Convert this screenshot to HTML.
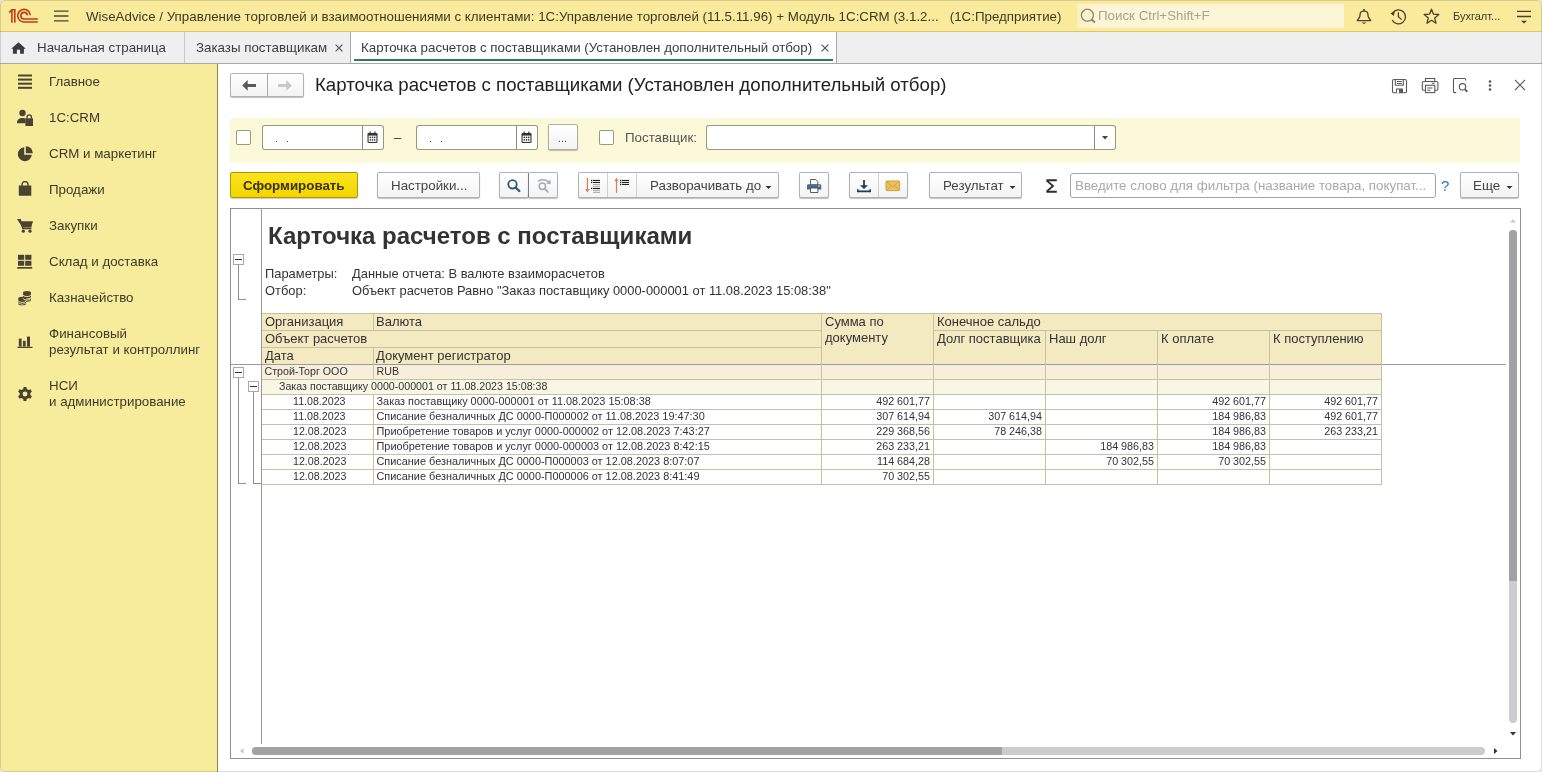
<!DOCTYPE html>
<html><head><meta charset="utf-8">
<style>
*{margin:0;padding:0;box-sizing:border-box}
html,body{width:1542px;height:772px;overflow:hidden;background:#dfe2e6}
body{font-family:"Liberation Sans",sans-serif;color:#333;position:relative}
.a{position:absolute;white-space:nowrap}
#win{position:absolute;left:0;top:0;width:1542px;height:772px;border-radius:5px;overflow:hidden;background:#fff;will-change:transform}
#hdr{position:absolute;left:0;top:0;width:1542px;height:32px;background:#f9ea9c;border-bottom:1px solid #e0c566}
#tabs{position:absolute;left:0;top:32px;width:1542px;height:32px;background:#efeff0;border-bottom:1px solid #a9a9a9}
#side{position:absolute;left:0;top:64px;width:218px;height:708px;background:#f7ec9c;border-right:1px solid #8c8455}
.t13{font-size:13.33px;line-height:16px}
.btn{position:absolute;border:1px solid rgba(0,0,0,.3);border-radius:2px;background:linear-gradient(#fff,#f3f3f3);background-clip:padding-box;box-shadow:0 1px 1px rgba(0,0,0,.25)}
.inp{position:absolute;border:1px solid rgba(40,35,0,.45);border-radius:3px;background:#fff;background-clip:padding-box}
.si{position:absolute;left:17px;width:16px;height:16px}
.st{position:absolute;left:49px;font-size:13.33px;line-height:16px;color:#3d3a2a}
</style></head><body>
<div id="win">
<!-- header -->
<div id="hdr">
  <svg class="a" style="left:0;top:0" width="40" height="32" viewBox="0 0 40 32"><g fill="none" stroke="#bf3a1b" stroke-width="1.6"><path d="M9.2 12.6L11.9 9.8H14.8V22.7M11.9 9.8V22.7"/><path d="M30.3 15.2A6.3 6.3 0 1 0 24 22H37.8"/><path d="M27.4 15.4A3.3 3.3 0 1 0 24 19H37.8"/></g></svg>
  <svg class="a" style="left:54px;top:10px" width="15" height="12" viewBox="0 0 15 12"><g stroke="#4a4630" stroke-width="1.3"><path d="M0 1.2H14.5M0 6H14.5M0 10.8H14.5"/></g></svg>
  <div class="a t13" style="left:86px;top:9px;color:#3e3a24">WiseAdvice / Управление торговлей и взаимоотношениями с клиентами: 1С:Управление торговлей (11.5.11.96) + Модуль 1С:CRM (3.1.2...&nbsp;&nbsp; (1С:Предприятие)</div>
  <div class="a" style="left:1077px;top:4px;width:267px;height:24px;background:linear-gradient(90deg,#fbf0c0,#fdf6d6 8%,#fdf6d6)"></div>
  <div class="a t13" style="left:1098px;top:8px;color:#a8a290">Поиск Ctrl+Shift+F</div>
  <svg class="a" style="left:1079px;top:7px" width="18" height="18" viewBox="0 0 18 18"><circle cx="8.4" cy="8.2" r="6" fill="none" stroke="#8d8872" stroke-width="1.3"/><path d="M12.6 12.4L16 15.6" stroke="#8d8872" stroke-width="2"/></svg>
  <svg class="a" style="left:1356px;top:8px" width="16" height="17" viewBox="0 0 16 17"><path d="M1.3 12.6H14.7L12.3 8.8L11.7 5.2Q11.3 3.2 8 3.2Q4.7 3.2 4.3 5.2L3.7 8.8Z" fill="none" stroke="#4a4128" stroke-width="1.3" stroke-linejoin="round"/><circle cx="8" cy="2" r="1.1" fill="#4a4128"/><path d="M5.4 14.4H10.6L8 16Z" fill="#4a4128"/></svg>
  <svg class="a" style="left:1389px;top:8px" width="18" height="17" viewBox="0 0 18 17"><g fill="none" stroke="#4a4128" stroke-width="1.3"><path d="M3.6 5A7 7 0 1 1 3.2 12"/><path d="M9.4 4.3V8.6L12.6 11.6"/></g><path d="M1.3 5.2L5.8 3.6L4.8 8Z" fill="#4a4128"/></svg>
  <svg class="a" style="left:1423px;top:8px" width="17" height="17" viewBox="0 0 17 17"><path d="M8.5 1.2L10.5 6.2L15.8 6.5L11.7 9.9L13 15.2L8.5 12.3L4 15.2L5.3 9.9L1.2 6.5L6.5 6.2Z" fill="none" stroke="#4a4128" stroke-width="1.3" stroke-linejoin="round"/></svg>
  <svg class="a" style="left:1516px;top:9px" width="16" height="16" viewBox="0 0 16 16"><g stroke="#4a4128" stroke-width="1.3"><path d="M1 2.4H15M1 7.5H15"/></g><path d="M5 11.8H11L8 14.6Z" fill="#4a4128"/></svg>
  <div class="a" style="left:1453px;top:9px;font-size:11px;line-height:14px;color:#3d3a2a">Бухгалт...</div>
</div>
<!-- tabs -->
<div id="tabs">
  <svg class="a" style="left:11px;top:9px" width="16" height="14" viewBox="0 0 16 14"><path d="M7.5 1.2L14.8 7.7H12.9V12.7H9.1V8.8H5.9V12.7H1.9V7.7H0.2Z" fill="#3b3b3b"/></svg>
  <div class="a t13" style="left:37px;top:8px;color:#3d3d3d">Начальная страница</div>
  <svg class="a" style="left:335px;top:12px" width="8" height="8" viewBox="0 0 8 8"><path d="M0.6 0.6L7.4 7.4M7.4 0.6L0.6 7.4" stroke="#555" stroke-width="1.2"/></svg>
  <div class="a" style="left:184px;top:0;width:1px;height:31px;background:#c8c8c8"></div>
  <div class="a t13" style="left:196px;top:8px;color:#3d3d3d">Заказы поставщикам</div>
  <div class="a" style="left:350px;top:0;width:1px;height:31px;background:#a9a9a9"></div>
  <div class="a" style="left:351px;top:0;width:486px;height:31px;background:#fff"></div>
  <div class="a t13" style="left:361px;top:8px;color:#3d3d3d">Карточка расчетов с поставщиками (Установлен дополнительный отбор)</div>
  <div class="a" style="left:354px;top:27px;width:479px;height:2px;background:#2e7d58"></div>
  <div class="a" style="left:836px;top:0;width:1px;height:31px;background:#a9a9a9"></div>
  <svg class="a" style="left:821px;top:12px" width="8" height="8" viewBox="0 0 8 8"><path d="M0.6 0.6L7.4 7.4M7.4 0.6L0.6 7.4" stroke="#555" stroke-width="1.2"/></svg>
</div>
<!-- sidebar -->
<div id="side">
  <svg class="a" style="left:17px;top:10px" width="16" height="16" viewBox="0 0 16 16"><g fill="#4b4332"><rect x="1" y="0.5" width="14" height="2"/><rect x="1" y="4.6" width="14" height="2"/><rect x="1" y="8.7" width="14" height="2"/><rect x="1" y="12.8" width="14" height="2"/></g></svg>
  <svg class="a" style="left:16px;top:45px" width="18" height="18" viewBox="0 0 18 18"><g fill="#4b4332"><circle cx="6.5" cy="4" r="3.2"/><path d="M1 14.2C1 10.5 3 9 6.5 9C8.2 9 9.2 9.4 9.6 10V14.2Z"/><path d="M9.4 9.2H17V17H9.4Z"/><path d="M11 9.5V8A2.2 2.2 0 0 1 15.4 8V9.5" fill="none" stroke="#4b4332" stroke-width="1.3"/></g></svg>
  <svg class="a" style="left:17px;top:82px" width="16" height="16" viewBox="0 0 16 16"><g fill="#4b4332"><path d="M7.2 1.2A7 7 0 1 0 14.8 8.8H7.2Z"/><path d="M8.8 0.2A6.8 6.8 0 0 1 15.8 7.2H8.8Z"/></g></svg>
  <svg class="a" style="left:17px;top:117px" width="16" height="16" viewBox="0 0 16 16"><g fill="#4b4332"><path d="M1.8 4.5H14.3V14.8H1.8Z"/><path d="M5 6V3.5A3 3 0 0 1 11 3.5V6" fill="none" stroke="#4b4332" stroke-width="1.4"/></g><path d="M5 4.5V6.5M11 4.5V6.5" stroke="#f8e99b" stroke-width="0"/></svg>
  <svg class="a" style="left:16px;top:154px" width="18" height="16" viewBox="0 0 18 16"><g fill="#4b4332"><path d="M1 1H4L5 3.2H17L15.2 9.5H6.5Z"/><path d="M4 1 L6.8 10.5H15.5" fill="none" stroke="#4b4332" stroke-width="1.3"/><circle cx="7.3" cy="13.2" r="1.6"/><circle cx="14" cy="13.2" r="1.6"/></g></svg>
  <svg class="a" style="left:17px;top:190px" width="16" height="16" viewBox="0 0 16 16"><g fill="#4b4332"><rect x="1" y="0.8" width="6.2" height="5"/><rect x="8.2" y="0.8" width="6.2" height="5"/><rect x="1" y="6.8" width="6.2" height="5"/><rect x="8.2" y="6.8" width="6.2" height="5"/><rect x="0.2" y="13" width="15" height="1.7"/></g></svg>
  <svg class="a" style="left:17px;top:226px" width="16" height="16" viewBox="0 0 16 16"><g fill="#4b4332"><ellipse cx="10" cy="2.8" rx="4" ry="1.9"/><path d="M6 3.5H14V6.5A4 1.9 0 0 1 6 6.5Z"/><path d="M6 7.3V9.8A4 1.9 0 0 0 14 9.8V7.3A4 1.9 0 0 1 6 7.3Z"/><ellipse cx="5.2" cy="8.6" rx="4" ry="1.9"/><path d="M1.2 9.3H9.2V11.8A4 1.9 0 0 1 1.2 11.8Z"/><path d="M1.2 12.6V13.4A4 1.9 0 0 0 9.2 13.4V12.6A4 1.9 0 0 1 1.2 12.6Z"/></g><g fill="none" stroke="#f8e99b" stroke-width="0.9"><path d="M6 4.7A4 1.9 0 0 0 14 4.7"/><path d="M1.2 10.5A4 1.9 0 0 0 9.2 10.5"/><path d="M6 8.2A4 1.9 0 0 0 14 8.2"/></g></svg>
  <svg class="a" style="left:17px;top:270px" width="16" height="16" viewBox="0 0 16 16"><g fill="#4b4332"><rect x="1.8" y="4.6" width="2.8" height="8"/><rect x="5.9" y="6.8" width="2.8" height="5.8"/><rect x="10" y="2.6" width="3" height="10"/><rect x="0.5" y="12.8" width="15" height="1.2"/></g></svg>
  <svg class="a" style="left:17px;top:322px" width="16" height="16" viewBox="0 0 16 16"><path fill="#4b4332" fill-rule="evenodd" d="M6.6 1H9.4L9.8 3A5 5 0 0 1 11.6 4L13.5 3.3L14.9 5.7L13.3 7A5 5 0 0 1 13.3 9L14.9 10.3L13.5 12.7L11.6 12A5 5 0 0 1 9.8 13L9.4 15H6.6L6.2 13A5 5 0 0 1 4.4 12L2.5 12.7L1.1 10.3L2.7 9A5 5 0 0 1 2.7 7L1.1 5.7L2.5 3.3L4.4 4A5 5 0 0 1 6.2 3ZM8 5.6A2.4 2.4 0 1 0 8 10.4A2.4 2.4 0 1 0 8 5.6Z"/></svg>
  <div class="st" style="top:10px">Главное</div>
  <div class="st" style="top:46px">1С:CRM</div>
  <div class="st" style="top:82px">CRM и маркетинг</div>
  <div class="st" style="top:118px">Продажи</div>
  <div class="st" style="top:154px">Закупки</div>
  <div class="st" style="top:190px">Склад и доставка</div>
  <div class="st" style="top:226px">Казначейство</div>
  <div class="st" style="top:262px">Финансовый<br>результат и контроллинг</div>
  <div class="st" style="top:314px">НСИ<br>и администрирование</div>
</div>
<!-- content -->
<div id="content">
  <!-- nav buttons -->
  <div class="btn" style="left:230px;top:73px;width:74px;height:24px"></div>
  <div class="a" style="left:267px;top:74px;width:1px;height:22px;background:#a8a8a8"></div>
  <svg class="a" style="left:241px;top:79px" width="16" height="13" viewBox="0 0 16 13"><path d="M1.2 6.4L6.7 1.1V5H15V7.9H6.7V11.8Z" fill="#5a5a5a"/></svg>
  <svg class="a" style="left:277px;top:79px" width="16" height="13" viewBox="0 0 16 13"><path d="M14.8 6.4L9.3 1.1V5H1V7.9H9.3V11.8Z" fill="#c8c8c8"/></svg>
  <div class="a" style="left:315px;top:74px;font-size:18.67px;line-height:22px;color:#222">Карточка расчетов с поставщиками (Установлен дополнительный отбор)</div>
  <!-- form icons -->
  <svg class="a" style="left:1391px;top:78px" width="17" height="16" viewBox="0 0 17 16"><g fill="none" stroke="#5a5a5a" stroke-width="1.1"><rect x="1.5" y="1.5" width="14" height="13.3" rx="1.4"/><path d="M4.3 1.5V7.2H12.3V1.5"/><path d="M6 3.5H10.8M6 5.5H10.8"/></g><rect x="5" y="10.5" width="7" height="4.5" fill="#5a5a5a"/><rect x="6" y="11.6" width="2" height="3.4" fill="#fff"/></svg>
  <svg class="a" style="left:1421px;top:77px" width="18" height="17" viewBox="0 0 18 17"><g fill="none" stroke="#5a5a5a" stroke-width="1.1"><rect x="4.5" y="1.5" width="9.3" height="3"/><path d="M4.2 13.2H2.6A1.3 1.3 0 0 1 1.3 11.9V5.8A1.3 1.3 0 0 1 2.6 4.5H15.6A1.3 1.3 0 0 1 16.9 5.8V11.9A1.3 1.3 0 0 1 15.6 13.2H14"/><rect x="4.5" y="8.3" width="9.3" height="7.3" fill="#fff"/><path d="M6.3 11H11.5M6.3 13.2H9.5"/><path d="M10.8 6.3H13.5"/></g></svg>
  <svg class="a" style="left:1452px;top:77px" width="17" height="17" viewBox="0 0 17 17"><g fill="none" stroke="#5a5a5a" stroke-width="1.1"><path d="M4.2 15.6H2.5A1 1 0 0 1 1.5 14.6V2.5A1 1 0 0 1 2.5 1.5H12.6A1 1 0 0 1 13.6 2.5V3.6"/><circle cx="10.5" cy="9.8" r="3.2"/></g><path d="M12.8 12.2L15.4 14.8" stroke="#5a5a5a" stroke-width="1.8"/></svg>
  <svg class="a" style="left:1488px;top:80px" width="4" height="11" viewBox="0 0 4 11"><g fill="#555"><circle cx="2" cy="1.5" r="1.3"/><circle cx="2" cy="5.5" r="1.3"/><circle cx="2" cy="9.5" r="1.3"/></g></svg>
  <svg class="a" style="left:1514px;top:79px" width="12" height="12" viewBox="0 0 12 12"><path d="M1 1L11 11M11 1L1 11" stroke="#666" stroke-width="1.1"/></svg>
  <!-- filter panel -->
  <div class="a" style="left:230px;top:118px;width:1290px;height:45px;background:#fcf9da"></div>
  <div class="a" style="left:236px;top:130px;width:15px;height:15px;border:1px solid rgba(40,35,0,.45);border-radius:2px;background:#fff;background-clip:padding-box"></div>
  <div class="inp" style="left:262px;top:125px;width:122px;height:25px"></div>
  <div class="a" style="left:362px;top:126px;width:1px;height:23px;background:#8f8b7c"></div><svg class="a" style="left:367px;top:131px" width="11" height="12" viewBox="0 0 11 12"><g fill="#333"><rect x="0.5" y="2" width="10" height="10" rx="1.3"/><rect x="2.5" y="0.5" width="1.2" height="2.5"/><rect x="7.3" y="0.5" width="1.2" height="2.5"/></g><rect x="1.6" y="4.6" width="7.8" height="6.3" fill="#fff"/><g fill="#333"><circle cx="3.3" cy="6.4" r="0.8"/><circle cx="5.5" cy="6.4" r="0.8"/><circle cx="7.7" cy="6.4" r="0.8"/><circle cx="3.3" cy="8.9" r="0.8"/><circle cx="5.5" cy="8.9" r="0.8"/><circle cx="7.7" cy="8.9" r="0.8"/></g></svg>
  <div class="a" style="left:276px;top:141px;width:1px;height:1px;background:#444"></div><div class="a" style="left:287px;top:141px;width:1px;height:1px;background:#444"></div>
  <div class="a" style="left:394px;top:130px;font-size:13.33px;line-height:16px;color:#333">–</div>
  <div class="inp" style="left:416px;top:125px;width:122px;height:25px"></div>
  <div class="a" style="left:516px;top:126px;width:1px;height:23px;background:#8f8b7c"></div><svg class="a" style="left:521px;top:131px" width="11" height="12" viewBox="0 0 11 12"><g fill="#333"><rect x="0.5" y="2" width="10" height="10" rx="1.3"/><rect x="2.5" y="0.5" width="1.2" height="2.5"/><rect x="7.3" y="0.5" width="1.2" height="2.5"/></g><rect x="1.6" y="4.6" width="7.8" height="6.3" fill="#fff"/><g fill="#333"><circle cx="3.3" cy="6.4" r="0.8"/><circle cx="5.5" cy="6.4" r="0.8"/><circle cx="7.7" cy="6.4" r="0.8"/><circle cx="3.3" cy="8.9" r="0.8"/><circle cx="5.5" cy="8.9" r="0.8"/><circle cx="7.7" cy="8.9" r="0.8"/></g></svg>
  <div class="a" style="left:430px;top:141px;width:1px;height:1px;background:#444"></div><div class="a" style="left:441px;top:141px;width:1px;height:1px;background:#444"></div>
  <div class="btn" style="left:548px;top:124px;width:30px;height:26px"></div>
  <div class="a" style="left:558px;top:131px;font-size:11px;line-height:14px;color:#555">...</div>
  <div class="a" style="left:599px;top:130px;width:15px;height:15px;border:1px solid rgba(40,35,0,.45);border-radius:2px;background:#fff;background-clip:padding-box"></div>
  <div class="a" style="left:625px;top:130px;font-size:13.33px;line-height:16px;color:#555">Поставщик:</div>
  <div class="inp" style="left:706px;top:125px;width:410px;height:25px"></div>
  <div class="a" style="left:1094px;top:126px;width:1px;height:23px;background:#8f8b7c"></div>
  <svg class="a" style="left:1102px;top:136px" width="6" height="4" viewBox="0 0 6 4"><path d="M0 0H6L3 3.5Z" fill="#444"/></svg>
  <!-- toolbar -->
  <div class="a" style="left:230px;top:172px;width:128px;height:26px;border:1px solid #ad9700;border-radius:2px;background:linear-gradient(#fae41c,#f3d500);box-shadow:0 1px 1px rgba(0,0,0,.2)"></div>
  <div class="a" style="left:243px;top:178px;font-size:13.33px;line-height:16px;font-weight:bold;color:#3a3200">Сформировать</div>
  <div class="btn" style="left:377px;top:172px;width:103px;height:26px"></div>
  <div class="a" style="left:391px;top:178px;font-size:13.33px;line-height:16px;color:#444">Настройки...</div>
  <div class="btn" style="left:499px;top:172px;width:30px;height:26px"></div>
  <div class="btn" style="left:528px;top:172px;width:30px;height:26px"></div>
  <div class="btn" style="left:578px;top:172px;width:201px;height:26px"></div>
  <div class="a" style="left:607px;top:173px;width:1px;height:24px;background:#d0d0d0"></div>
  <div class="a" style="left:636px;top:173px;width:1px;height:24px;background:#d0d0d0"></div>
  <div class="a" style="left:650px;top:178px;font-size:13.33px;line-height:16px;color:#444">Разворачивать до</div>
  <svg class="a" style="left:765px;top:186px" width="7" height="4" viewBox="0 0 7 4"><path d="M0.5 0H6.5L3.5 3Z" fill="#333"/></svg>
  <div class="btn" style="left:799px;top:172px;width:30px;height:26px"></div>
  <div class="btn" style="left:849px;top:172px;width:59px;height:26px"></div>
  <div class="a" style="left:878px;top:173px;width:1px;height:24px;background:#d0d0d0"></div>
  <div class="btn" style="left:929px;top:172px;width:93px;height:26px"></div>
  <div class="a" style="left:943px;top:178px;font-size:13.33px;line-height:16px;color:#444">Результат</div>
  <svg class="a" style="left:1009px;top:186px" width="7" height="4" viewBox="0 0 7 4"><path d="M0.5 0H6.5L3.5 3Z" fill="#333"/></svg>
  <svg class="a" style="left:1045px;top:179px" width="13" height="14" viewBox="0 0 13 14"><path d="M1.4 1.3H11.8M1.4 12.7H11.8" stroke="#2b2b2b" stroke-width="2"/><path d="M1.8 1.6L8 7L1.8 12.4" fill="none" stroke="#2b2b2b" stroke-width="1.8"/></svg>
  <div class="inp" style="left:1070px;top:173px;width:366px;height:25px;border-color:#a3a3a3"></div>
  <div class="a" style="left:1075px;top:178px;font-size:13.33px;line-height:16px;color:#a9a9a9">Введите слово для фильтра (название товара, покупат...</div>
  <div class="a" style="left:1441px;top:177px;font-size:15px;line-height:17px;color:#2d75b3">?</div>
  <div class="btn" style="left:1460px;top:172px;width:59px;height:26px"></div>
  <div class="a" style="left:1473px;top:178px;font-size:13.33px;line-height:16px;color:#444">Еще</div>
  <svg class="a" style="left:1506px;top:186px" width="7" height="4" viewBox="0 0 7 4"><path d="M0.5 0H6.5L3.5 3Z" fill="#333"/></svg>

  <svg class="a" style="left:504px;top:177px" width="20" height="18" viewBox="0 0 20 18"><circle cx="8.5" cy="7.3" r="4.2" fill="none" stroke="#2f5d75" stroke-width="1.9"/><path d="M11.6 10.5L15.3 14" stroke="#2f5d75" stroke-width="2.4" stroke-linecap="round"/></svg>
  <svg class="a" style="left:533px;top:177px" width="20" height="18" viewBox="0 0 20 18"><path d="M5 4.6C7 2.4 12 1.8 15.5 4.6" fill="none" stroke="#a3adb0" stroke-width="1.5"/><path d="M17.6 2.6L17.6 7.2L13.2 6.6Z" fill="#a3adb0"/><circle cx="9.4" cy="9.3" r="3.2" fill="none" stroke="#a3adb0" stroke-width="1.5"/><path d="M11.6 11.6L14.8 14.8" stroke="#a3adb0" stroke-width="1.8" stroke-linecap="round"/></svg>
  <svg class="a" style="left:583px;top:176px" width="20" height="18" viewBox="0 0 20 18"><path d="M4.4 1.8V14.5" stroke="#d6815a" stroke-width="1.2"/><path d="M2.2 13H6.6L4.4 16.5Z" fill="#d6815a"/><g fill="#222"><rect x="8" y="3.8" width="1.3" height="1.3"/><rect x="10" y="3.9" width="7" height="1.1"/><rect x="8" y="5.8" width="1.3" height="1.3"/><rect x="10" y="5.9" width="7" height="1.1"/><rect x="8" y="11.8" width="1.3" height="1.3"/><rect x="10" y="11.9" width="7" height="1.1"/></g><g fill="#999"><rect x="10" y="7.9" width="7" height="0.9"/><rect x="10" y="9.8" width="7" height="0.9"/><rect x="10" y="13.8" width="7" height="0.9"/><rect x="10" y="15.8" width="7" height="0.9"/></g></svg>
  <svg class="a" style="left:612px;top:176px" width="20" height="18" viewBox="0 0 20 18"><path d="M4.5 4V16.8" stroke="#d6815a" stroke-width="1.2"/><path d="M2.3 5.2H6.7L4.5 1.7Z" fill="#d6815a"/><g fill="#222"><rect x="8" y="3.8" width="1.3" height="1.3"/><rect x="10" y="3.9" width="7" height="1.1"/><rect x="8" y="5.8" width="1.3" height="1.3"/><rect x="10" y="5.9" width="7" height="1.1"/><rect x="8" y="7.8" width="1.3" height="1.3"/><rect x="10" y="7.9" width="7" height="1.1"/></g></svg>
  <svg class="a" style="left:806px;top:178px" width="16" height="16" viewBox="0 0 16 16"><path d="M4.6 1.5H9.8L11.8 3.5V7H4.6Z" fill="#fff" stroke="#3d4a5c" stroke-width="0.9"/><path d="M2 6.3H14A1.3 1.3 0 0 1 15.3 7.6V11.6H1V7.6A1.3 1.3 0 0 1 2 6.3Z" fill="#506a8e"/><rect x="12" y="7.5" width="1.8" height="0.9" fill="#dde6f0"/><path d="M4.5 10H11.9V14.5H4.5Z" fill="#fff" stroke="#3d4a5c" stroke-width="0.9"/></svg>
  <svg class="a" style="left:856px;top:178px" width="16" height="16" viewBox="0 0 16 16"><path d="M8 2V9" stroke="#143f66" stroke-width="1.8"/><path d="M4 7.2H12L8 11Z" fill="#143f66"/><path d="M1.8 11.2V13.4H14.2V11.2" fill="none" stroke="#143f66" stroke-width="1.6"/></svg>
  <svg class="a" style="left:885px;top:180px" width="16" height="12" viewBox="0 0 16 12"><rect x="1" y="1" width="13.6" height="9.6" rx="1" fill="#ecc15a" stroke="#c99a3c" stroke-width="0.9"/><path d="M1.4 1.4L7.8 6.8L14.2 1.4M1.4 10.2L6 6M14.2 10.2L9.6 6" fill="none" stroke="#c99a3c" stroke-width="0.8"/></svg>
  <!-- report -->
  <div id="rep" class="a" style="left:230px;top:208px;width:1291px;height:551px;border:1px solid #8f8f8f;background:#fff;overflow:hidden"></div>
  <div class="a" style="left:261px;top:209px;width:1px;height:535px;background:#9a9a9a"></div>
  <div class="a" style="left:231px;top:364px;width:1275px;height:1px;background:#9a9a9a"></div>
  <div class="a" style="left:268px;top:222px;font-size:24px;line-height:28px;font-weight:bold;color:#333">Карточка расчетов с поставщиками</div>
  <div class="a" style="left:265px;top:266px;font-size:12.9px;line-height:16px;color:#333">Параметры:</div>
  <div class="a" style="left:352px;top:266px;font-size:12.9px;line-height:16px;color:#333">Данные отчета: В валюте взаиморасчетов</div>
  <div class="a" style="left:265px;top:283px;font-size:12.9px;line-height:16px;color:#333">Отбор:</div>
  <div class="a" style="left:352px;top:283px;font-size:12.9px;line-height:16px;color:#333">Объект расчетов Равно "Заказ поставщику 0000-000001 от 11.08.2023 15:08:38"</div>
<!-- tree -->
  <div class="a" style="left:233px;top:254px;width:11px;height:11px;border:1px solid #a9a9a9;background:#fff"></div>
  <div class="a" style="left:235px;top:259px;width:7px;height:1px;background:#333"></div>
  <div class="a" style="left:238px;top:265px;width:1px;height:34px;background:#8e8e8e"></div>
  <div class="a" style="left:238px;top:299px;width:8px;height:1px;background:#8e8e8e"></div>
  <div class="a" style="left:233px;top:367px;width:11px;height:11px;border:1px solid #a9a9a9;background:#fff"></div>
  <div class="a" style="left:235px;top:372px;width:7px;height:1px;background:#333"></div>
  <div class="a" style="left:238px;top:378px;width:1px;height:106px;background:#8e8e8e"></div>
  <div class="a" style="left:238px;top:483px;width:8px;height:1px;background:#8e8e8e"></div>
  <div class="a" style="left:248px;top:381px;width:11px;height:11px;border:1px solid #a9a9a9;background:#fff"></div>
  <div class="a" style="left:250px;top:386px;width:7px;height:1px;background:#333"></div>
  <div class="a" style="left:253px;top:392px;width:1px;height:92px;background:#8e8e8e"></div>
  <div class="a" style="left:253px;top:483px;width:8px;height:1px;background:#8e8e8e"></div>
  <!-- scrollbars -->
  <div class="a" style="left:1509px;top:230px;width:8px;height:493px;border-radius:4px;background:#cdcbcf"></div>
  <div class="a" style="left:1509px;top:230px;width:8px;height:351px;border-radius:4px 4px 0 0;background:#a3a1a6"></div>
  <svg class="a" style="left:1510px;top:219px" width="6" height="4" viewBox="0 0 6 4"><path d="M0 3.5H6L3 0Z" fill="#c8c8c8"/></svg>
  <svg class="a" style="left:1510px;top:732px" width="6" height="4" viewBox="0 0 6 4"><path d="M0 0H6L3 3.5Z" fill="#333"/></svg>
  <div class="a" style="left:252px;top:747px;width:1233px;height:8px;border-radius:4px;background:#cdcbcf"></div>
  <div class="a" style="left:252px;top:747px;width:750px;height:8px;border-radius:4px 0 0 4px;background:#a3a1a6"></div>
  <svg class="a" style="left:240px;top:748px" width="4" height="6" viewBox="0 0 4 6"><path d="M3.5 0V6L0 3Z" fill="#c8c8c8"/></svg>
  <svg class="a" style="left:1494px;top:748px" width="4" height="6" viewBox="0 0 4 6"><path d="M0 0V6L3.5 3Z" fill="#333"/></svg>
<!--REPORT-->
<div class="a" style="left:262px;top:313px;width:1120px;height:51px;background:#f3eac1"></div>
<div class="a" style="left:262px;top:364px;width:1120px;height:15px;background:#f7eedb"></div>
<div class="a" style="left:262px;top:379px;width:1120px;height:15px;background:#f8f6e4"></div>
<div class="a" style="left:262px;top:313px;width:1120px;height:1px;background:#c6c1a0"></div>
<div class="a" style="left:262px;top:330px;width:560px;height:1px;background:#c6c1a0"></div>
<div class="a" style="left:933px;top:330px;width:449px;height:1px;background:#c6c1a0"></div>
<div class="a" style="left:262px;top:347px;width:560px;height:1px;background:#c6c1a0"></div>
<div class="a" style="left:262px;top:379px;width:1120px;height:1px;background:#c6c1a0"></div>
<div class="a" style="left:262px;top:394px;width:1120px;height:1px;background:#c6c1a0"></div>
<div class="a" style="left:262px;top:409px;width:1120px;height:1px;background:#c6c1a0"></div>
<div class="a" style="left:262px;top:424px;width:1120px;height:1px;background:#c6c1a0"></div>
<div class="a" style="left:262px;top:439px;width:1120px;height:1px;background:#c6c1a0"></div>
<div class="a" style="left:262px;top:454px;width:1120px;height:1px;background:#c6c1a0"></div>
<div class="a" style="left:262px;top:469px;width:1120px;height:1px;background:#c6c1a0"></div>
<div class="a" style="left:262px;top:484px;width:1120px;height:1px;background:#c6c1a0"></div>
<div class="a" style="left:262px;top:364px;width:1120px;height:1px;background:#c6c1a0"></div>
<div class="a" style="left:231px;top:364px;width:1275px;height:1px;background:#9a9a9a"></div>
<div class="a" style="left:373px;top:313px;width:1px;height:18px;background:#c6c1a0"></div>
<div class="a" style="left:373px;top:347px;width:1px;height:33px;background:#c6c1a0"></div>
<div class="a" style="left:373px;top:394px;width:1px;height:91px;background:#c6c1a0"></div>
<div class="a" style="left:821px;top:313px;width:1px;height:172px;background:#c6c1a0"></div>
<div class="a" style="left:933px;top:313px;width:1px;height:172px;background:#c6c1a0"></div>
<div class="a" style="left:1045px;top:330px;width:1px;height:155px;background:#c6c1a0"></div>
<div class="a" style="left:1157px;top:330px;width:1px;height:155px;background:#c6c1a0"></div>
<div class="a" style="left:1269px;top:330px;width:1px;height:155px;background:#c6c1a0"></div>
<div class="a" style="left:1381px;top:313px;width:1px;height:172px;background:#c6c1a0"></div>
<div class="a" style="left:265px;top:313.80px;font-size:13.0px;line-height:16px;color:#333">Организация</div>
<div class="a" style="left:376px;top:313.80px;font-size:13.0px;line-height:16px;color:#333">Валюта</div>
<div class="a" style="left:825px;top:313.80px;font-size:13.0px;line-height:16px;color:#333">Сумма по</div>
<div class="a" style="left:825px;top:330.00px;font-size:13.0px;line-height:16px;color:#333">документу</div>
<div class="a" style="left:937px;top:313.80px;font-size:13.0px;line-height:16px;color:#333">Конечное сальдо</div>
<div class="a" style="left:265px;top:330.70px;font-size:13.0px;line-height:16px;color:#333">Объект расчетов</div>
<div class="a" style="left:937px;top:330.70px;font-size:13.0px;line-height:16px;color:#333">Долг поставщика</div>
<div class="a" style="left:1049px;top:330.70px;font-size:13.0px;line-height:16px;color:#333">Наш долг</div>
<div class="a" style="left:1161px;top:330.70px;font-size:13.0px;line-height:16px;color:#333">К оплате</div>
<div class="a" style="left:1273px;top:330.70px;font-size:13.0px;line-height:16px;color:#333">К поступлению</div>
<div class="a" style="left:265px;top:347.50px;font-size:13.0px;line-height:16px;color:#333">Дата</div>
<div class="a" style="left:376px;top:347.50px;font-size:13.0px;line-height:16px;color:#333">Документ регистратор</div>
<div class="a" style="left:264.5px;top:364.60px;font-size:10.67px;line-height:13px;color:#333">Строй-Торг ООО</div>
<div class="a" style="left:376.5px;top:364.60px;font-size:10.67px;line-height:13px;color:#333">RUB</div>
<div class="a" style="left:279px;top:379.60px;font-size:10.67px;line-height:13px;color:#333">Заказ поставщику 0000-000001 от 11.08.2023 15:08:38</div>
<div class="a" style="left:293px;top:395.00px;font-size:10.67px;line-height:13px;color:#333">11.08.2023</div>
<div class="a" style="left:376.5px;top:394.92px;font-size:10.9px;line-height:13px;color:#333">Заказ поставщику 0000-000001 от 11.08.2023 15:08:38</div>
<div class="a" style="right:612px;top:394.98px;font-size:10.75px;line-height:13px;color:#333">492 601,77</div>
<div class="a" style="right:276px;top:394.98px;font-size:10.75px;line-height:13px;color:#333">492 601,77</div>
<div class="a" style="right:164px;top:394.98px;font-size:10.75px;line-height:13px;color:#333">492 601,77</div>
<div class="a" style="left:293px;top:410.00px;font-size:10.67px;line-height:13px;color:#333">11.08.2023</div>
<div class="a" style="left:376.5px;top:409.92px;font-size:10.9px;line-height:13px;color:#333">Списание безналичных ДС 0000-П000002 от 11.08.2023 19:47:30</div>
<div class="a" style="right:612px;top:409.98px;font-size:10.75px;line-height:13px;color:#333">307 614,94</div>
<div class="a" style="right:500px;top:409.98px;font-size:10.75px;line-height:13px;color:#333">307 614,94</div>
<div class="a" style="right:276px;top:409.98px;font-size:10.75px;line-height:13px;color:#333">184 986,83</div>
<div class="a" style="right:164px;top:409.98px;font-size:10.75px;line-height:13px;color:#333">492 601,77</div>
<div class="a" style="left:293px;top:425.00px;font-size:10.67px;line-height:13px;color:#333">12.08.2023</div>
<div class="a" style="left:376.5px;top:424.92px;font-size:10.9px;line-height:13px;color:#333">Приобретение товаров и услуг 0000-000002 от 12.08.2023 7:43:27</div>
<div class="a" style="right:612px;top:424.98px;font-size:10.75px;line-height:13px;color:#333">229 368,56</div>
<div class="a" style="right:500px;top:424.98px;font-size:10.75px;line-height:13px;color:#333">78 246,38</div>
<div class="a" style="right:276px;top:424.98px;font-size:10.75px;line-height:13px;color:#333">184 986,83</div>
<div class="a" style="right:164px;top:424.98px;font-size:10.75px;line-height:13px;color:#333">263 233,21</div>
<div class="a" style="left:293px;top:440.00px;font-size:10.67px;line-height:13px;color:#333">12.08.2023</div>
<div class="a" style="left:376.5px;top:439.92px;font-size:10.9px;line-height:13px;color:#333">Приобретение товаров и услуг 0000-000003 от 12.08.2023 8:42:15</div>
<div class="a" style="right:612px;top:439.98px;font-size:10.75px;line-height:13px;color:#333">263 233,21</div>
<div class="a" style="right:388px;top:439.98px;font-size:10.75px;line-height:13px;color:#333">184 986,83</div>
<div class="a" style="right:276px;top:439.98px;font-size:10.75px;line-height:13px;color:#333">184 986,83</div>
<div class="a" style="left:293px;top:455.00px;font-size:10.67px;line-height:13px;color:#333">12.08.2023</div>
<div class="a" style="left:376.5px;top:454.92px;font-size:10.9px;line-height:13px;color:#333">Списание безналичных ДС 0000-П000003 от 12.08.2023 8:07:07</div>
<div class="a" style="right:612px;top:454.98px;font-size:10.75px;line-height:13px;color:#333">114 684,28</div>
<div class="a" style="right:388px;top:454.98px;font-size:10.75px;line-height:13px;color:#333">70 302,55</div>
<div class="a" style="right:276px;top:454.98px;font-size:10.75px;line-height:13px;color:#333">70 302,55</div>
<div class="a" style="left:293px;top:470.00px;font-size:10.67px;line-height:13px;color:#333">12.08.2023</div>
<div class="a" style="left:376.5px;top:469.92px;font-size:10.9px;line-height:13px;color:#333">Списание безналичных ДС 0000-П000006 от 12.08.2023 8:41:49</div>
<div class="a" style="right:612px;top:469.98px;font-size:10.75px;line-height:13px;color:#333">70 302,55</div>
<!--/REPORT-->
</div>
<div class="a" style="left:0;top:0;width:1542px;height:772px;border:1px solid rgba(90,95,110,.22);border-radius:5px"></div>
</div>
</body></html>
